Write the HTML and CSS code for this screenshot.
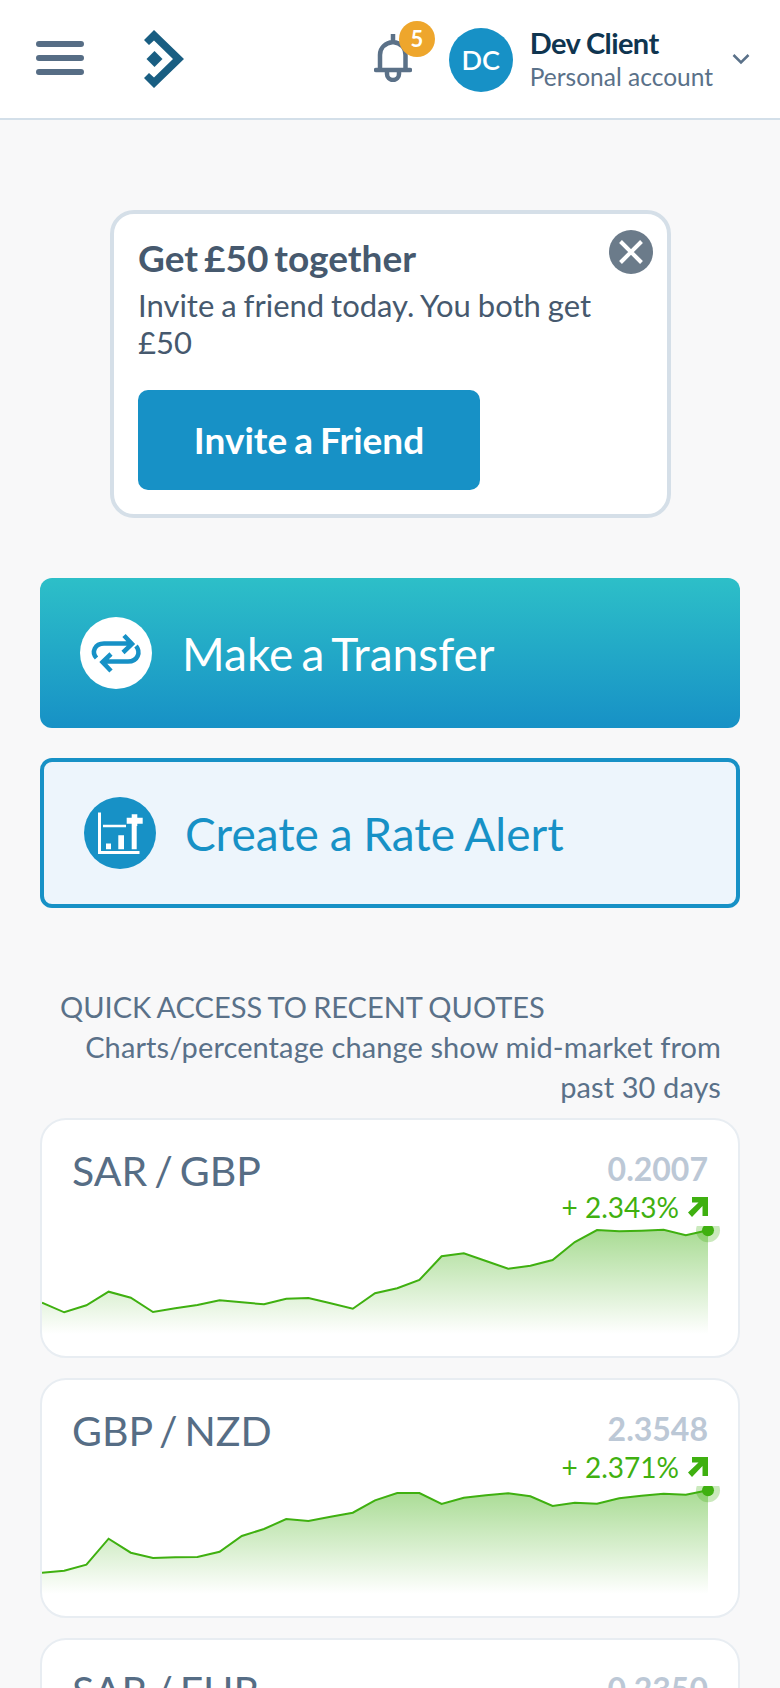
FILE: index.html
```html
<!DOCTYPE html>
<html lang="en">
<head>
<meta charset="utf-8">
<title>Dashboard</title>
<link rel="stylesheet" href="styles.css">
</head>
<body>
<header class="topbar">
  <svg class="menu-icon" viewBox="0 0 48 34"><path d="M3 3h42M3 17h42M3 31h42"/></svg>
  <svg class="logo" viewBox="0 0 40 58"><path class="logo-fill" d="M10 0 40 29 10 58 0 48 5 43 10 47.500 29 29 10 10.500 5 15 0 10Z"/><path class="logo-fill" d="M10.500 21 18.500 29 10.500 37 2.500 29Z"/></svg>
  <div class="spacer"></div>
  <div class="bell">
    <svg class="bell-icon" viewBox="0 0 38 48"><path d="M2 36H36M6 36V21C6 13 12 9 19 8C26 9 31.500 13 31.500 21V36M19 0V8M13 37V40A6 6 0 0 0 25 40V37"/></svg>
    <span class="badge">5</span>
  </div>
  <div class="avatar">DC</div>
  <div class="user">
    <div class="user-name">Dev Client</div>
    <div class="user-type">Personal account</div>
  </div>
  <svg class="chevron" viewBox="0 0 18 12"><path d="M1.500 2 9 9.500 16.500 2"/></svg>
</header>

<main class="content">
  <section class="promo">
    <button class="promo-close" aria-label="Close"><svg viewBox="0 0 24 24"><path d="M1.500 1.500 22.500 22.500M22.500 1.500 1.500 22.500"/></svg></button>
    <h2 class="promo-title">Get £50 together</h2>
    <p class="promo-text">Invite a friend today. You both get £50</p>
    <a class="promo-btn">Invite a Friend</a>
  </section>

  <a class="action action-primary">
    <span class="action-icon icon-white">
      <svg viewBox="0 0 72 72"><path d="M44 18.500 52 27 43 35.500M51 26.500H24C15 26.500 11 35 16.500 41M31 37 22.500 45 31 54M23 44.500H48C58 44.500 61 35 56 29"/></svg>
    </span>
    <span>Make a Transfer</span>
  </a>
  <a class="action action-secondary">
    <span class="action-icon icon-blue">
      <svg viewBox="0 0 72 72"><path class="chart-axis" d="M15.500 15.500V55.500H55.500"/><path class="chart-line" d="M19 29H42"/><path class="chart-bars" d="M22 46.500H27V52.300H22ZM34.300 38.300H40V52.300H34.300ZM47.700 29H52.700V52.300H47.700ZM42.700 20.700H47.700V17.300H53.300V20.700H58.700V26.700H53.300V29H47.700V26.700H42.700Z"/></svg>
    </span>
    <span>Create a Rate Alert</span>
  </a>

  <section class="quotes">
    <h3 class="quotes-title">QUICK ACCESS TO RECENT QUOTES</h3>
    <p class="quotes-note">Charts/percentage change show mid-market from past 30 days</p>

    <article class="quote">
      <div class="quote-head">
        <div class="quote-pair">SAR / GBP</div>
        <div class="quote-figures">
          <div class="quote-rate">0.2007</div>
          <div class="quote-change">+ 2.343%<svg class="arrow" viewBox="0 0 20 20"><path d="M4 0H20V19H14.500V9L4 20 0 15.500 10.500 5.500H4Z"/></svg></div>
        </div>
      </div>
      <svg class="spark" viewBox="0 0 680 108">
        <defs>
          <linearGradient id="fade1" x1="0" y1="0" x2="0" y2="1"><stop offset="0" stop-color="#3fb010" stop-opacity=".45"/><stop offset="1" stop-color="#3fb010" stop-opacity="0"/></linearGradient>
        </defs>
        <path fill="url(#fade1)" d="M0 76.700L22.200 86.300 44.400 79.300 66.600 65.700 88.800 71.700 111 86 133.200 82.300 155.400 79 177.600 74.300 199.800 76.300 222 78.300 244.200 72.700 266.400 72 288.600 77.300 310.800 82.700 333 67.300 355.200 62.300 377.400 54 399.600 30.300 421.800 27.300 444 35 466.200 42.700 488.400 39.700 510.600 34 532.800 16 555 4 577.200 5.300 599.400 4.700 621.600 3.700 643.800 9.300 666 4.300V108H0Z"/>
        <path class="spark-line" d="M0 76.700L22.200 86.300 44.400 79.300 66.600 65.700 88.800 71.700 111 86 133.200 82.300 155.400 79 177.600 74.300 199.800 76.300 222 78.300 244.200 72.700 266.400 72 288.600 77.300 310.800 82.700 333 67.300 355.200 62.300 377.400 54 399.600 30.300 421.800 27.300 444 35 466.200 42.700 488.400 39.700 510.600 34 532.800 16 555 4 577.200 5.300 599.400 4.700 621.600 3.700 643.800 9.300 666 4.300"/>
        <circle class="spark-halo" cx="666" cy="4.300" r="12"/><circle class="spark-dot" cx="666" cy="4.300" r="6"/>
      </svg>
    </article>

    <article class="quote">
      <div class="quote-head">
        <div class="quote-pair">GBP / NZD</div>
        <div class="quote-figures">
          <div class="quote-rate">2.3548</div>
          <div class="quote-change">+ 2.371%<svg class="arrow" viewBox="0 0 20 20"><path d="M4 0H20V19H14.500V9L4 20 0 15.500 10.500 5.500H4Z"/></svg></div>
        </div>
      </div>
      <svg class="spark" viewBox="0 0 680 108">
        <defs>
          <linearGradient id="fade2" x1="0" y1="0" x2="0" y2="1"><stop offset="0" stop-color="#3fb010" stop-opacity=".45"/><stop offset="1" stop-color="#3fb010" stop-opacity="0"/></linearGradient>
        </defs>
        <path fill="url(#fade2)" d="M0 86.700L22.200 84.700 44.400 78.700 66.600 52.700 88.800 66.700 111 72 133.200 71.300 155.400 71 177.600 65.700 199.800 50 222 43 244.200 33 266.400 35 288.600 30.700 310.800 26.700 333 14.300 355.200 7 377.400 7 399.600 18 421.800 11.700 444 9.300 466.200 7.300 488.400 10.300 510.600 20 532.800 16.700 555 17.700 577.200 12.300 599.400 9.700 621.600 7.700 643.800 8.700 666 4.300V108H0Z"/>
        <path class="spark-line" d="M0 86.700L22.200 84.700 44.400 78.700 66.600 52.700 88.800 66.700 111 72 133.200 71.300 155.400 71 177.600 65.700 199.800 50 222 43 244.200 33 266.400 35 288.600 30.700 310.800 26.700 333 14.300 355.200 7 377.400 7 399.600 18 421.800 11.700 444 9.300 466.200 7.300 488.400 10.300 510.600 20 532.800 16.700 555 17.700 577.200 12.300 599.400 9.700 621.600 7.700 643.800 8.700 666 4.300"/>
        <circle class="spark-halo" cx="666" cy="4.300" r="12"/><circle class="spark-dot" cx="666" cy="4.300" r="6"/>
      </svg>
    </article>

    <article class="quote">
      <div class="quote-head">
        <div class="quote-pair">SAR / EUR</div>
        <div class="quote-figures">
          <div class="quote-rate">0.2350</div>
        </div>
      </div>
    </article>
  </section>
</main>
</body>
</html>
```

FILE: styles.css
```css
* { box-sizing: border-box; }
html, body { margin: 0; height: 1688px; overflow: hidden; }
body { background: #f8f8f9; font-family: Lato, "Liberation Sans", sans-serif; color: #46596e; }

.topbar { display: flex; align-items: center; height: 120px; padding: 0 30px 0 36px; background: #fff; border-bottom: 2px solid #d3dfe9; }
.menu-icon { width: 48px; height: 34px; flex: none; margin-top: -2px; }
.menu-icon path { fill: none; stroke: #566d85; stroke-width: 6; stroke-linecap: round; }
.logo { width: 40px; height: 58px; flex: none; margin-left: 60px; }
.logo-fill { fill: #195e82; }
.spacer { flex: 1; }
.bell { position: relative; width: 75px; height: 60px; flex: none; }
.bell-icon { position: absolute; left: 0; top: 5px; width: 38px; height: 48px; }
.bell-icon path { fill: none; stroke: #5b7188; stroke-width: 4.500; stroke-linecap: round; }
.badge { position: absolute; left: 25px; top: -8px; width: 36px; height: 36px; border-radius: 50%; background: #eea62c; color: #fff; font-size: 22px; font-weight: 700; line-height: 36px; text-align: center; }
.avatar { width: 64px; height: 64px; flex: none; margin-top: 2px; border-radius: 50%; background: #1791c6; color: #fff; font-size: 27px; font-weight: 600; line-height: 64px; text-align: center; }
.user { flex: none; margin-left: 17px; }
.user-name { font-size: 29px; font-weight: 700; line-height: 34px; color: #0f3550; letter-spacing: -0.6px; }
.user-type { margin-top: 1px; font-size: 24.500px; line-height: 32px; color: #5a7189; }
.chevron { width: 18px; height: 12px; flex: none; margin-left: 19px; }
.chevron path { fill: none; stroke: #5a7189; stroke-width: 2.500; }

.content { padding: 90px 40px 0; }
.promo { position: relative; width: 561px; height: 308px; margin: 0 0 0 70px; padding: 22px 24px; background: #fff; border: 4px solid #d5dfe8; border-radius: 24px; }
.promo-close { position: absolute; right: 14px; top: 16px; width: 44px; height: 44px; padding: 10px; border: 0; border-radius: 50%; background: #6b7b8a; }
.promo-close svg { display: block; width: 24px; height: 24px; }
.promo-close path { fill: none; stroke: #fff; stroke-width: 4; }
.promo-title { margin: 0; font-size: 37px; font-weight: 700; line-height: 44px; color: #46596e; word-spacing: -3px; }
.promo-text { margin: 7px 0 0; font-size: 31px; line-height: 37px; color: #46596e; width: 470px; word-spacing: -1px; }
.promo-btn { display: block; width: 342px; height: 100px; margin-top: 29px; border-radius: 10px; background: #1791c6; color: #fff; font-size: 37px; font-weight: 700; line-height: 100px; text-align: center; word-spacing: -2px; }

.action { display: flex; align-items: center; height: 150px; border-radius: 12px; font-size: 46px; }
.action-primary { margin-top: 60px; padding-left: 40px; gap: 30px; color: #fff; background: linear-gradient(#2dbfc8, #1791c6); word-spacing: -3.500px; }
.action-secondary { margin-top: 30px; padding-left: 40px; gap: 29px; color: #1791c6; background: #edf5fc; border: 4px solid #1791c6; word-spacing: -1px; }
.action-icon { display: block; width: 72px; height: 72px; flex: none; border-radius: 50%; }
.action-icon svg { display: block; width: 72px; height: 72px; }
.icon-white { background: #fff; }
.icon-white path { fill: none; stroke: #1791c6; stroke-width: 4.500; }
.icon-blue { background: #1791c6; }
.chart-axis, .chart-line { fill: none; stroke: #fff; }
.chart-axis { stroke-width: 3; }
.chart-line { stroke-width: 2.500; }
.chart-bars { fill: #fff; }

.quotes { margin-top: 79px; }
.quotes-title { margin: 0 0 0 20px; font-size: 29px; font-weight: 400; line-height: 40px; color: #5a7189; word-spacing: -1.200px; }
.quotes-note { margin: 0 19px 0 0; padding-left: 40px; font-size: 29px; line-height: 40px; color: #5a7189; text-align: right; letter-spacing: 0.100px; }
.quote { height: 239.500px; margin-top: 20.500px; background: #fff; border: 2px solid #e8edf2; border-radius: 26px; overflow: hidden; }
.quotes-note + .quote { margin-top: 11px; }
.quote-head { display: flex; justify-content: space-between; height: 106px; padding: 27px 30px 0; }
.quote-pair { font-size: 41px; line-height: 48px; color: #566d85; word-spacing: -3.500px; }
.quote-figures { margin-top: 1px; text-align: right; }
.quote-rate { font-size: 32px; font-weight: 700; line-height: 42px; color: #bcc8d6; }
.quote-change { display: flex; align-items: center; justify-content: flex-end; gap: 9px; font-size: 28px; line-height: 34px; color: #3fb010; }
.arrow { width: 20px; height: 20px; fill: #3fb010; }
.spark { display: block; width: 680px; height: 108px; }
.spark-line { fill: none; stroke: #3fb010; stroke-width: 2; }
.spark-halo { fill: #3fb010; opacity: .28; }
.spark-dot { fill: #3fb010; }
```
